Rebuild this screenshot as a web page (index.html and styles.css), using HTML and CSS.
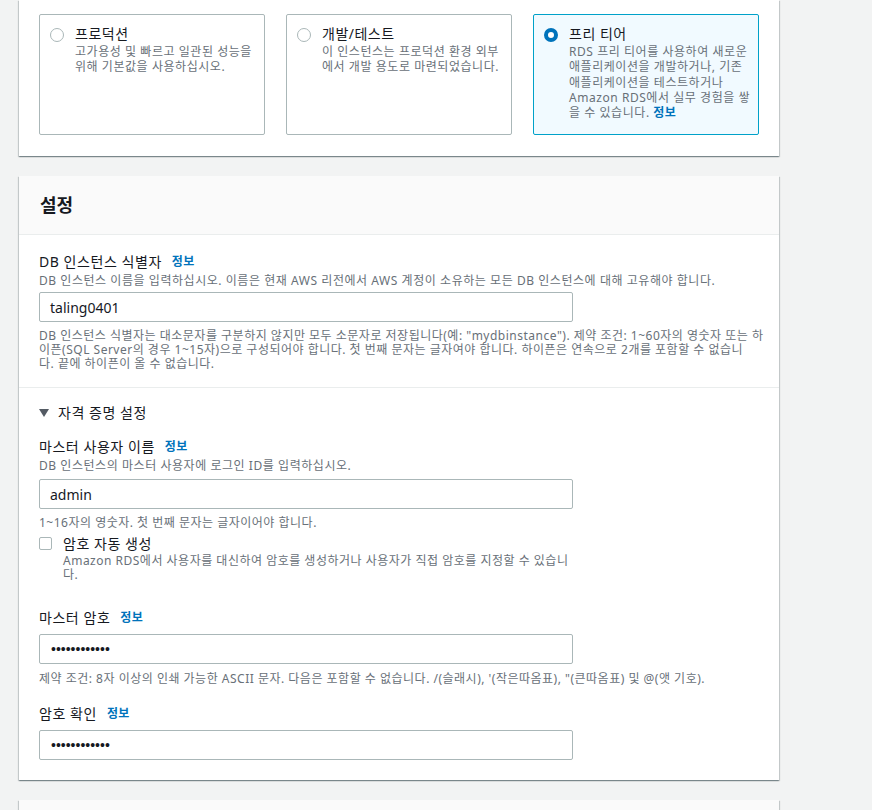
FILE: index.html
```html
<!DOCTYPE html>
<html lang="en">
<head>
<meta charset="utf-8">
<title>RDS 데이터베이스 생성</title>
<link rel="stylesheet" href="styles.css">
</head>
<body>
<div class="page">
  <section class="panel panel-templates">
    <div class="cards">
      <div class="card">
        <span class="radio"></span>
        <div class="card-text">
          <div class="card-title">프로덕션</div>
          <div class="card-desc">고가용성 및 빠르고 일관된 성능을 위해 기본값을 사용하십시오.</div>
        </div>
      </div>
      <div class="card">
        <span class="radio"></span>
        <div class="card-text">
          <div class="card-title">개발/테스트</div>
          <div class="card-desc">이 인스턴스는 프로덕션 환경 외부에서 개발 용도로 마련되었습니다.</div>
        </div>
      </div>
      <div class="card card-selected">
        <span class="radio radio-on"></span>
        <div class="card-text">
          <div class="card-title">프리 티어</div>
          <div class="card-desc">RDS 프리 티어를 사용하여 새로운 애플리케이션을 개발하거나, 기존 애플리케이션을 테스트하거나 Amazon RDS에서 실무 경험을 쌓을 수 있습니다. <a class="info">정보</a></div>
        </div>
      </div>
    </div>
  </section>

  <section class="panel">
    <header class="panel-header"><h2>설정</h2></header>
    <div class="section section-first">
      <div class="label"><span>DB 인스턴스 식별자</span><a class="info info-gap">정보</a></div>
      <div class="desc">DB 인스턴스 이름을 입력하십시오. 이름은 현재 AWS 리전에서 AWS 계정이 소유하는 모든 DB 인스턴스에 대해 고유해야 합니다.</div>
      <div class="input input-after-desc">taling0401</div>
      <div class="hint hint-wide">DB 인스턴스 식별자는 대소문자를 구분하지 않지만 모두 소문자로 저장됩니다(예: "mydbinstance"). 제약 조건: 1~60자의 영숫자 또는 하이픈(SQL Server의 경우 1~15자)으로 구성되어야 합니다. 첫 번째 문자는 글자여야 합니다. 하이픈은 연속으로 2개를 포함할 수 없습니<br>다. 끝에 하이픈이 올 수 없습니다.</div>
    </div>
    <div class="section section-second">
      <div class="expander">
        <svg class="caret" width="10" height="8" viewBox="0 0 10 8"><path d="M0 0 H10 L5 8 Z" fill="#545b64"/></svg>
        <span>자격 증명 설정</span>
      </div>
      <div class="label label-master"><span>마스터 사용자 이름</span><a class="info info-gap">정보</a></div>
      <div class="desc">DB 인스턴스의 마스터 사용자에 로그인 ID를 입력하십시오.</div>
      <div class="input input-after-desc2">admin</div>
      <div class="hint">1~16자의 영숫자. 첫 번째 문자는 글자이어야 합니다.</div>
      <div class="check-row">
        <span class="checkbox"></span>
        <div class="check-text">
          <div class="check-label">암호 자동 생성</div>
          <div class="hint hint-check">Amazon RDS에서 사용자를 대신하여 암호를 생성하거나 사용자가 직접 암호를 지정할 수 있습니다.</div>
        </div>
      </div>
      <div class="label label-pw"><span>마스터 암호</span><a class="info info-gap">정보</a></div>
      <div class="input input-after-label dots">••••••••••••</div>
      <div class="hint hint-pw">제약 조건: 8자 이상의 인쇄 가능한 ASCII 문자. 다음은 포함할 수 없습니다. /(슬래시), '(작은따옴표), "(큰따옴표) 및 @(앳 기호).</div>
      <div class="label label-confirm"><span>암호 확인</span><a class="info info-gap">정보</a></div>
      <div class="input input-after-label dots">••••••••••••</div>
    </div>
  </section>

  <section class="panel panel-next">
    <header class="panel-header panel-header-next"></header>
  </section>
</div>
</body>
</html>
```

FILE: styles.css
```css
html, body {
  margin: 0;
  padding: 0;
}
body {
  background: #f2f3f3;
  font-family: "Noto Sans", "Noto Sans CJK KR", sans-serif;
  color: #16191f;
  font-size: 14px;
  word-break: normal;
}
.page {
  width: 760px;
  margin-left: 19px;
  display: flex;
  flex-direction: column;
  gap: 20px;
}
.panel {
  background: #fff;
  box-shadow: 0 1px 1px 0 rgba(0, 28, 36, 0.3), 1px 1px 1px 0 rgba(0, 28, 36, 0.15), -1px 1px 1px 0 rgba(0, 28, 36, 0.15);
}
.panel-templates {
  padding: 14px 20px 21px;
}
.cards {
  display: grid;
  grid-template-columns: repeat(3, 226px);
  gap: 21px;
}
.card {
  box-sizing: border-box;
  height: 121px;
  border: 1px solid #aab7b8;
  border-radius: 2px;
  padding: 9px 6px 0 10px;
  display: flex;
  gap: 11px;
  align-items: flex-start;
}
.card-selected {
  border-color: #00a1c9;
  background: #f1faff;
}
.radio {
  box-sizing: border-box;
  flex: 0 0 14px;
  width: 14px;
  height: 14px;
  margin-top: 4px;
  border: 1.5px solid #aab7b8;
  border-radius: 50%;
  background: #fff;
}
.radio-on {
  border: 4px solid #0073bb;
}
.card-title {
  font-size: 14px;
  line-height: 20px;
  letter-spacing: 0.5px;
  color: #16191f;
}
.card-desc {
  font-size: 12px;
  line-height: 15.3px;
  letter-spacing: 0.55px;
  color: #687078;
}
.info {
  color: #0073bb;
  font-weight: 700;
  font-size: 12px;
  letter-spacing: 0.3px;
  text-decoration: none;
}
.info-gap {
  margin-left: 10px;
}
.panel-header {
  height: 58px;
  padding: 0 21px;
  background: #fafafa;
  border-bottom: 1px solid #eaeded;
  display: flex;
  align-items: center;
}
.panel-header h2 {
  margin: 0;
  font-size: 18px;
  font-weight: 700;
  line-height: 22px;
  color: #16191f;
}
.panel-header-next {
  height: 10px;
  border-bottom: 0;
}
.section {
  padding: 0 20px;
}
.section-first {
  padding-top: 17px;
  padding-bottom: 16px;
  border-bottom: 1px solid #eaeded;
}
.section-second {
  padding-top: 15px;
  padding-bottom: 20px;
}
.label {
  display: flex;
  align-items: center;
  height: 20px;
  font-size: 14px;
  line-height: 20px;
  letter-spacing: 0.55px;
  color: #16191f;
}
.desc {
  font-size: 12px;
  line-height: 17px;
  letter-spacing: 0.55px;
  color: #687078;
}
.input {
  box-sizing: border-box;
  width: 534px;
  height: 30px;
  border: 1px solid #aab7b8;
  border-radius: 2px;
  padding: 0 10px;
  display: flex;
  align-items: center;
  font-size: 14px;
  color: #16191f;
  background: #fff;
}
.input-after-desc {
  margin-top: 3px;
}
.input-after-desc2 {
  margin-top: 5px;
}
.input-after-label {
  margin-top: 6px;
}
.dots {
  font-family: "Liberation Sans", sans-serif;
  font-size: 14px;
  padding-left: 11px;
}
.hint {
  font-size: 12px;
  line-height: 14px;
  letter-spacing: 0.5px;
  color: #687078;
  margin-top: 7px;
}
.hint-wide {
  margin-right: -5px;
}
.hint-pw {
  margin-top: 8px;
}
.expander {
  display: flex;
  align-items: center;
  gap: 9px;
  height: 20px;
  font-size: 14px;
  line-height: 20px;
  letter-spacing: 0.55px;
  color: #16191f;
}
.caret {
  display: block;
}
.label-master {
  margin-top: 14px;
}
.check-row {
  display: flex;
  gap: 11px;
  margin-top: 4px;
  width: 537px;
}
.checkbox {
  box-sizing: border-box;
  flex: 0 0 13px;
  width: 13px;
  height: 13px;
  margin-top: 3px;
  border: 1px solid #aab7b8;
  border-radius: 2px;
  background: #fff;
}
.check-text {
  flex: 1;
}
.check-label {
  font-size: 14px;
  line-height: 20px;
  letter-spacing: 0.55px;
}
.hint-check {
  margin-top: 0;
}
.label-pw {
  margin-top: 26px;
}
.label-confirm {
  margin-top: 18px;
}
```
